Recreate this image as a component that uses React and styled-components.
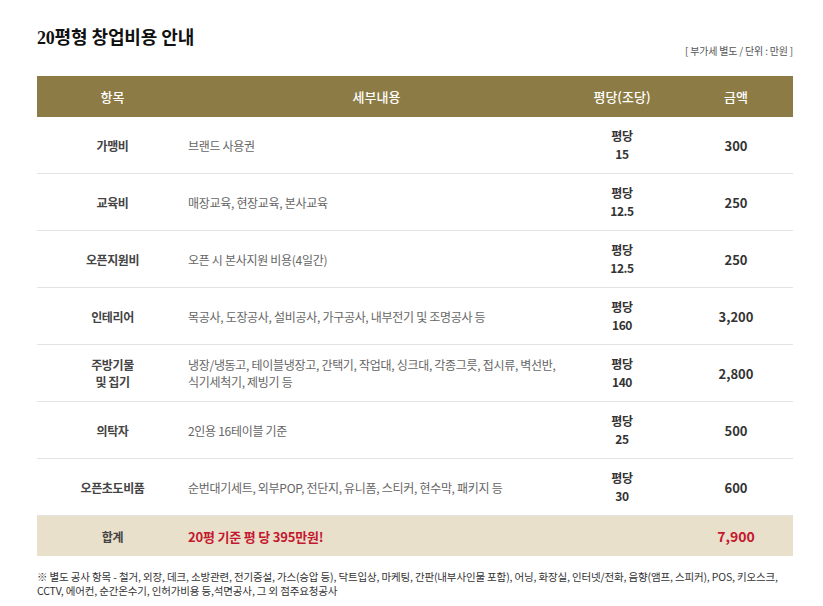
import React from "react";
import styled, { createGlobalStyle } from "styled-components";

const GlobalStyle = createGlobalStyle`
	html, body {
		margin: 0;
		padding: 0;
		background: #fff;
	}
	body {
		font-family: "Noto Sans CJK KR", "Noto Sans", sans-serif;
		color: #333;
	}
`;

const Page = styled.div`
	width: 756px;
	margin-left: 37px;
	padding-top: 26px;
`;

const TitleRow = styled.div`
	display: flex;
	justify-content: space-between;
	align-items: flex-end;
	height: 32px;
	margin-bottom: 18px;
`;

const Title = styled.h2`
	margin: 0;
	font-family: "Liberation Serif", "Noto Sans CJK KR", serif;
	font-size: 18px;
	font-weight: 700;
	color: #111;
	letter-spacing: -0.2px;
	align-self: flex-start;
	line-height: 24px;
`;

const Unit = styled.span`
	font-size: 10px;
	color: #555;
	letter-spacing: -0.2px;
	line-height: 14px;
`;

const cols = "151px 377px 114px 114px";

const Head = styled.div`
	display: grid;
	grid-template-columns: ${cols};
	height: 41px;
	align-items: center;
	background: #8c7b44;
	color: #fff;
	font-size: 13px;
	font-weight: 500;
	text-align: center;
`;

const Row = styled.div`
	display: grid;
	grid-template-columns: ${cols};
	height: ${(p) => (p.$total ? "40px" : "56px")};
	align-items: center;
	background: ${(p) => (p.$total ? "#e8e0cb" : "#fff")};
	border-bottom: ${(p) => (p.$total ? "none" : "1px solid #e3e3e3")};
`;

const Name = styled.div`
	text-align: center;
	font-size: 12px;
	font-weight: 700;
	color: #444;
	letter-spacing: -0.4px;
	line-height: 17px;
`;

const Detail = styled.div`
	font-size: 12px;
	color: #666;
	letter-spacing: -0.3px;
	line-height: 17px;
`;

const Highlight = styled.div`
	font-size: 13px;
	font-weight: 700;
	color: #c4182f;
	letter-spacing: -0.2px;
`;

const PerPy = styled.div`
	text-align: center;
	font-size: 12px;
	font-weight: 700;
	color: #333;
	letter-spacing: -0.4px;
	line-height: 18px;
`;

const Amount = styled.div`
	text-align: center;
	font-size: ${(p) => (p.$red ? "14px" : "13px")};
	font-weight: 700;
	color: ${(p) => (p.$red ? "#c4182f" : "#333")};
`;

const Note = styled.p`
	margin: 14px 0 0;
	font-size: 10.5px;
	line-height: 14px;
	color: #333;
	letter-spacing: -0.15px;
`;

const rows = [
	{ name: "가맹비", detail: "브랜드 사용권", per: "15", amount: "300" },
	{ name: "교육비", detail: "매장교육, 현장교육, 본사교육", per: "12.5", amount: "250" },
	{ name: "오픈지원비", detail: "오픈 시 본사지원 비용(4일간)", per: "12.5", amount: "250" },
	{ name: "인테리어", detail: "목공사, 도장공사, 설비공사, 가구공사, 내부전기 및 조명공사 등", per: "160", amount: "3,200" },
	{
		name: ["주방기물", "및 집기"],
		detail: ["냉장/냉동고, 테이블냉장고, 간택기, 작업대, 싱크대, 각종그릇, 접시류, 벽선반,", "식기세척기, 제빙기 등"],
		per: "140",
		amount: "2,800",
	},
	{ name: "의탁자", detail: "2인용 16테이블 기준", per: "25", amount: "500" },
	{ name: "오픈초도비품", detail: "순번대기세트, 외부POP, 전단지, 유니폼, 스티커, 현수막, 패키지 등", per: "30", amount: "600" },
];

const lines = (v) =>
	Array.isArray(v) ? v.map((l, i) => <div key={i}>{l}</div>) : v;

export default function App() {
	return (
		<>
			<GlobalStyle />
			<Page>
				<TitleRow>
					<Title>20평형 창업비용 안내</Title>
					<Unit>[ 부가세 별도 / 단위 : 만원 ]</Unit>
				</TitleRow>
				<Head>
					<div>항목</div>
					<div>세부내용</div>
					<div>평당(조당)</div>
					<div>금액</div>
				</Head>
				{rows.map((r, i) => (
					<Row key={i}>
						<Name>{lines(r.name)}</Name>
						<Detail>{lines(r.detail)}</Detail>
						<PerPy>
							<div>평당</div>
							<div>{r.per}</div>
						</PerPy>
						<Amount>{r.amount}</Amount>
					</Row>
				))}
				<Row $total>
					<Name>합계</Name>
					<Highlight>20평 기준 평 당 395만원!</Highlight>
					<div />
					<Amount $red>7,900</Amount>
				</Row>
				<Note>
					※ 별도 공사 항목 - 철거, 외장, 데크, 소방관련, 전기증설, 가스(승압 등), 닥트입상, 마케팅, 간판(내부사인물 포함), 어닝, 화장실, 인터넷/전화, 음향(앰프, 스피커), POS, 키오스크,
					<br />
					CCTV, 에어컨, 순간온수기, 인허가비용 등,석면공사, 그 외 점주요청공사
				</Note>
			</Page>
		</>
	);
}
